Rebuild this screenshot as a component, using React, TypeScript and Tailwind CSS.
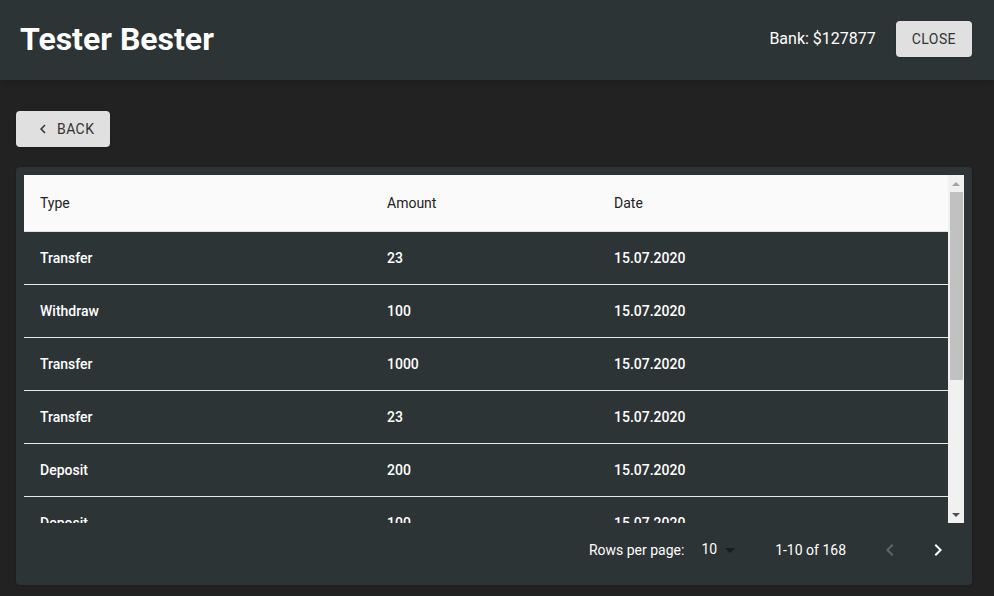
import React from 'react';

const rows = [
  { type: 'Transfer', amount: 23, date: '15.07.2020' },
  { type: 'Withdraw', amount: 100, date: '15.07.2020' },
  { type: 'Transfer', amount: 1000, date: '15.07.2020' },
  { type: 'Transfer', amount: 23, date: '15.07.2020' },
  { type: 'Deposit', amount: 200, date: '15.07.2020' },
  { type: 'Deposit', amount: 100, date: '15.07.2020' },
  { type: 'Withdraw', amount: 50, date: '15.07.2020' },
  { type: 'Transfer', amount: 300, date: '14.07.2020' },
  { type: 'Deposit', amount: 1500, date: '14.07.2020' },
  { type: 'Withdraw', amount: 20, date: '14.07.2020' },
];

function Chevron({ dir, className }: { dir: 'left' | 'right'; className?: string }) {
  return (
    <svg viewBox="0 0 24 24" className={className} fill="currentColor">
      {dir === 'left' ? (
        <path d="M15.41 7.41L14 6l-6 6 6 6 1.41-1.41L10.83 12z" />
      ) : (
        <path d="M10 6L8.59 7.41 13.17 12l-4.58 4.59L10 18l6-6z" />
      )}
    </svg>
  );
}

export default function App() {
  return (
    <div className="min-h-screen bg-[#222222] font-['Roboto',sans-serif]">
      {/* Header */}
      <header className="h-20 bg-[#2d3436] flex items-center justify-between pl-5 pr-[22px] pb-[2px] shadow-md">
        <h1 className="text-[32px] font-bold text-white leading-none -mt-[1px]">Tester Bester</h1>
        <div className="flex items-center gap-5">
          <span className="text-white text-base">Bank: $127877</span>
          <button className="h-9 px-4 rounded bg-[#e0e0e0] text-[#333] text-sm tracking-[0.03em] uppercase shadow">
            Close
          </button>
        </div>
      </header>

      <main className="pl-4 pr-[22px] pt-[31px]">
        <button className="h-9 w-[94px] pl-[19px] rounded bg-[#e0e0e0] text-[#333] text-sm tracking-[0.03em] uppercase shadow flex items-center gap-[5px]">
          <Chevron dir="left" className="w-[18px] h-[18px] -ml-[1px]" />
          Back
        </button>

        <div className="mt-5 rounded bg-[#2d3436] p-2 shadow">
          <div className="h-[348px] flex">
            {/* Table */}
            <div className="flex-1 overflow-hidden">
              <div className="grid grid-cols-[347px_227px_1fr] h-[57px] pb-[1px] bg-[#fafafa] border-b border-[#e0e0e0] items-center text-sm text-[#222]">
                <div className="px-4">Type</div>
                <div className="px-4">Amount</div>
                <div className="px-4">Date</div>
              </div>
              {rows.map((row, i) => (
                <div
                  key={i}
                  className="grid grid-cols-[347px_227px_1fr] h-[53px] pb-[1px] border-b border-[#e8e8e8] items-center text-sm font-medium text-white"
                >
                  <div className="px-4">{row.type}</div>
                  <div className="px-4">{row.amount}</div>
                  <div className="px-4">{row.date}</div>
                </div>
              ))}
            </div>

            {/* Scrollbar */}
            <div className="w-4 bg-[#f1f1f1] flex flex-col items-center">
              <div className="h-[17px] w-full flex items-center justify-center">
                <svg viewBox="0 0 8 4" className="w-2 h-1 text-[#a3a3a3]" fill="currentColor">
                  <path d="M4 0L8 4H0z" />
                </svg>
              </div>
              <div className="w-[13px] h-[188px] bg-[#c1c1c1] ml-[1px]" />
              <div className="flex-1" />
              <div className="h-[17px] w-full flex items-center justify-center">
                <svg viewBox="0 0 8 4" className="w-2 h-1 text-[#505050]" fill="currentColor">
                  <path d="M0 0H8L4 4z" />
                </svg>
              </div>
            </div>
          </div>

          <div className="h-[54px] flex items-center justify-end pr-[2px] text-sm text-white">
            <span>Rows per page:</span>
            <div className="ml-[17px] mr-[33px] flex items-center">
              <span className="-mt-[2px]">10</span>
              <svg viewBox="0 0 24 24" className="w-6 h-6 ml-[1px] -mt-[1px] text-[#1b1b1b]" fill="currentColor">
                <path d="M7 10l5 5 5-5z" />
              </svg>
            </div>
            <span>1-10 of 168</span>
            <div className="ml-5 flex items-center">
              <div className="w-12 h-12 flex items-center justify-center text-white/25">
                <Chevron dir="left" className="w-6 h-6" />
              </div>
              <div className="w-12 h-12 flex items-center justify-center text-white">
                <Chevron dir="right" className="w-6 h-6" />
              </div>
            </div>
          </div>
        </div>
      </main>
    </div>
  );
}
